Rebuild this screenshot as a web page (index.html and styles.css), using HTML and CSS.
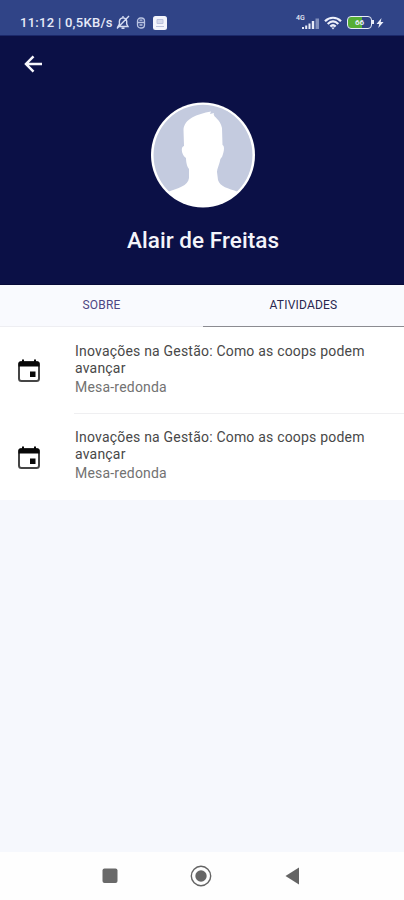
FILE: index.html
```html
<!DOCTYPE html>
<html lang="pt-BR">
<head>
<meta charset="utf-8">
<title>Alair de Freitas</title>
<link rel="stylesheet" href="styles.css">
</head>
<body>
<div class="screen">
  <div class="status">
    <span class="status-text">11:12 | 0,5KB/s</span>
    <svg class="bell" width="14" height="15" viewBox="0 0 14 15" fill="none" stroke="#d5dcf2" stroke-width="1.4"><path d="M2 11.5h10L10.700 9V6A3.700 3.700 0 0 0 3.400 6v3zM5.500 13.300h3M13 1L1 13.500M7 1v1.500"/></svg>
    <svg class="mouse" width="10" height="14" viewBox="0 0 10 14" fill="none" stroke="#b9c3e2" stroke-width="1.300"><rect x="1.500" y="2" width="7" height="10" rx="3"/><path d="M1.500 6.500h7M3.500 4.200h3M3.500 9h3"/></svg>
    <svg class="app" width="14" height="14" viewBox="0 0 14 14"><rect width="14" height="14" rx="2.500" fill="#f3f4fb"/><path d="M4 3.500h6v4H4zM3 10.500h8" fill="#d5d9ea" stroke="#bcc2dc"/></svg>
    <span class="network">4G</span>
    <svg class="signal" width="19" height="14" viewBox="0 0 19 14" fill="#e7ebf8"><path d="M1 11h2v2H1zM4.200 9.500h2V13h-2zM7.500 7.500h2V13h-2zM10.800 5h2.400v8h-2.400z"/><path d="M14.500 2.500H18V13h-3.500z" fill="#8290bd"/></svg>
    <svg class="wifi" width="18" height="14" viewBox="0 0 18 14" fill="none" stroke="#edf0fb" stroke-width="2.200"><path d="M1 5.200C5.600.6 12.400.6 17 5.200M3.700 8C7 4.800 11 4.800 14.300 8M6.300 10.500C8 8.900 10 8.900 11.700 10.500"/><path d="M9 13.500L7.300 11.500h3.400z" fill="#edf0fb" stroke="none"/></svg>
    <div class="battery"><span>66</span></div>
    <svg class="bolt" width="8" height="12" viewBox="0 0 8 12" fill="#edf0fb"><path d="M5.500 1L.5 7h2.700L2.300 11 7.500 5H4.700z"/></svg>
  </div>
  <header class="profile">
    <svg class="back" width="19" height="18" viewBox="0 0 19 18" fill="none" stroke="#f7f7fc" stroke-width="2.500"><path d="M18 9H2.500M9.500 1.300L2 9l7.500 7.700"/></svg>
    <svg class="avatar" width="104" height="106" viewBox="0 0 104 106">
      <defs><clipPath id="face"><ellipse cx="52" cy="53" rx="50" ry="51"/></clipPath></defs>
      <ellipse cx="52" cy="53" rx="52" ry="52.500" fill="#fff"/>
      <g clip-path="url(#face)"><ellipse cx="52" cy="53" rx="49.500" ry="50.200" fill="#c4cbdf"/>
      <path fill="#fff" d="M33 44L32.500 28C33 17 46 12 60 9.500L59 12L63 11C61 15 69 16 71 26L71.500 43C74 44 73 50 71 55C70 56 69 57 69 59C68 63 66 67 66 70L67 78C69 85 77 86 87 90V106H17V90C27 86 37 84 38 76L38 67C36 65 35 60 35 56C31 54 29 45 33 44Z"/></g>
    </svg>
    <h1>Alair de Freitas</h1>
  </header>
  <nav class="tabs">
    <span class="tab">SOBRE</span>
    <span class="tab active">ATIVIDADES</span>
  </nav>
  <main>
    <article class="item">
      <svg class="calendar" width="24" height="24" viewBox="0 0 24 24"><rect x="2" y="3" width="20" height="19" rx="2.500" fill="#fff" stroke="#454545" stroke-width="2"/><path d="M1.500 7.500V4.500a2 2 0 0 1 2-2H5V.5h2v2h10v-2h2v2h1.500a2 2 0 0 1 2 2v3zM13 12.500h5.500v5.500H13z" fill="#080808"/></svg>
      <div class="copy"><p>Inovações na Gestão: Como as coops podem avançar</p><small>Mesa-redonda</small></div>
    </article>
    <article class="item">
      <svg class="calendar" width="24" height="24" viewBox="0 0 24 24"><rect x="2" y="3" width="20" height="19" rx="2.500" fill="#fff" stroke="#454545" stroke-width="2"/><path d="M1.500 7.500V4.500a2 2 0 0 1 2-2H5V.5h2v2h10v-2h2v2h1.500a2 2 0 0 1 2 2v3zM13 12.500h5.500v5.500H13z" fill="#080808"/></svg>
      <div class="copy"><p>Inovações na Gestão: Como as coops podem avançar</p><small>Mesa-redonda</small></div>
    </article>
  </main>
  <footer class="system">
    <svg width="16" height="16" viewBox="0 0 16 16"><rect x=".5" y=".5" width="15" height="14.500" rx="2" fill="#696969"/></svg>
    <svg width="22" height="22" viewBox="0 0 22 22"><circle cx="11" cy="11" r="9.700" fill="none" stroke="#646464" stroke-width="1.400"/><circle cx="11" cy="11" r="5.700" fill="#656565"/></svg>
    <svg width="15" height="18" viewBox="0 0 15 18"><path d="M14 .5v17L.5 9z" fill="#646464"/></svg>
  </footer>
</div>
</body>
</html>
```
FILE: styles.css
```css
* { box-sizing: border-box; }
body { margin: 0; font-family: Roboto, sans-serif; }
.screen { width: 404px; height: 900px; display: flex; flex-direction: column; background: #f6f8fd; overflow: hidden; }
.status { height: 36px; flex: none; display: flex; align-items: center; padding: 10px 0 0 20px; background: #304487; border-bottom: 1px solid #1b286a; color: #e6eaf8; }
.status-text { width: 94px; font-size: 13px; font-weight: 500; letter-spacing: .28px; white-space: nowrap; }
.bell { margin-left: 2px; }
.mouse { margin-left: 6px; }
.app { margin-left: 7px; }
.network { margin: -9px 0 0 129px; width: 8px; font-size: 7px; line-height: 7px; font-weight: 500; white-space: nowrap; }
.signal { margin-left: -3px; }
.wifi { margin-left: 4px; }
.battery { position: relative; width: 25px; height: 13px; margin-left: 5px; border: 1.5px solid #e8edf8; border-radius: 4px; background: linear-gradient(90deg, #55ae35 62%, #304487 62%); background-clip: padding-box; }
.battery::after { content: ""; position: absolute; right: -3px; top: 3px; width: 2px; height: 4px; background: #e8edf8; }
.battery span { display: block; text-align: center; font-size: 8px; line-height: 11px; font-weight: 700; }
.bolt { margin-left: 4px; }
.profile { height: 249px; flex: none; display: flex; flex-direction: column; align-items: center; background: #0b1046; border-bottom: 1px solid #070a38; }
.back { align-self: flex-start; margin: 19px 0 0 24px; }
.avatar { margin: 29px 0 0 2px; }
h1 { margin: 19px 0 0 2px; color: #f4f4fa; font-size: 22.5px; line-height: 26px; font-weight: 500; letter-spacing: .05px; }
.tabs { height: 42px; flex: none; display: flex; background: #f9fafe; }
.tab { width: 203px; padding-top: 12px; border-bottom: 1px solid #eeeef2; text-align: center; color: #4c4783; font-size: 12px; line-height: 16px; letter-spacing: .2px; }
.tab.active { width: 201px; color: #29264f; border-bottom: 1px solid #8b8b91; }
main { background: #fff; flex: none; height: 173px; }
.item { display: flex; align-items: flex-start; height: 86.5px; padding-left: 17px; }
.calendar { flex: none; margin-top: 32px; }
.copy { flex: 1; margin-left: 33px; padding: 15.500px 30px 0 1px; height: 86.5px; border-bottom: 1px solid #efeff1; }
.item:last-child .copy { border-bottom: 0; }
.copy p { margin: 0; font-size: 14px; line-height: 17px; letter-spacing: .2px; color: #484848; }
.copy small { display: block; margin-top: 1px; font-size: 14px; line-height: 18px; letter-spacing: .2px; color: #727272; }
.system { height: 48px; flex: none; margin-top: auto; display: flex; align-items: center; padding-left: 102px; background: #fefefe; }
.system svg:nth-child(2) { margin-left: 72px; }
.system svg:nth-child(3) { margin-left: 73px; }
```
